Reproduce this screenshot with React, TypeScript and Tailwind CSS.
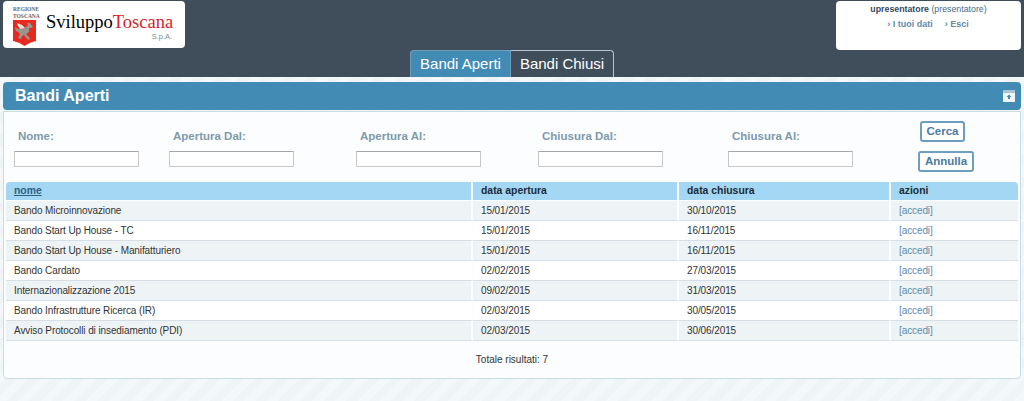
const rows = [
  ["Bando Microinnovazione", "15/01/2015", "30/10/2015"],
  ["Bando Start Up House - TC", "15/01/2015", "16/11/2015"],
  ["Bando Start Up House - Manifatturiero", "15/01/2015", "16/11/2015"],
  ["Bando Cardato", "02/02/2015", "27/03/2015"],
  ["Internazionalizzazione 2015", "09/02/2015", "31/03/2015"],
  ["Bando Infrastrutture Ricerca (IR)", "02/03/2015", "30/05/2015"],
  ["Avviso Protocolli di insediamento (PDI)", "02/03/2015", "30/06/2015"],
];

const filters = [
  { label: "Nome:", cls: "w-[155px]" },
  { label: "Apertura Dal:", cls: "w-[187px]" },
  { label: "Apertura Al:", cls: "w-[182px]" },
  { label: "Chiusura Dal:", cls: "w-[190px]" },
  { label: "Chiusura Al:", cls: "w-[190px]" },
];

function Shield() {
  return (
    <svg width="23" height="26" viewBox="0 0 23 26" className="mt-[1px]">
      <path d="M0 0H23V21Q17 22 11.5 26Q6 22 0 21Z" fill="#e62a20" />
      <path d="M5 18L7 14L5 12L3 11L2 7L5 9L8 9L12 8L15 5L14 3L17 3L20 7L18 8L16 8L16 12L13 14L16 17L17 20L14 19L11 15L9 16L8 19Z" fill="#9a938c" />
      <path d="M4 3L9 5L12 8L7 9L5 6Z" fill="#e8e4de" />
    </svg>
  );
}

function Logo() {
  return (
    <div className="flex h-[47px] w-[182px] rounded-[4px] bg-white pl-[10px] pt-[5px]">
      <div className="flex w-[33px] flex-col font-['Liberation_Serif',serif] text-[5.5px] font-bold leading-[6.5px] text-[#666]">
        <span>REGIONE</span>
        <span>TOSCANA</span>
        <Shield />
      </div>
      <div className="flex flex-col">
        <div className="mt-[6px] font-['Liberation_Serif',serif] text-[18.5px] leading-[21px] text-black">
          Sviluppo<span className="text-[#d8232a]">Toscana</span>
        </div>
        <div className="mt-[-1px] self-end pr-[1px] font-['Liberation_Sans',sans-serif] text-[7.5px] leading-[9px] text-[#888]">S.p.A.</div>
      </div>
    </div>
  );
}

function ArchiveIcon() {
  return (
    <svg width="12" height="12" viewBox="0 0 12 12">
      <rect x="0" y="0" width="12" height="3" fill="#a9c3d3" />
      <rect x="0" y="3" width="12" height="9" fill="#eef4f7" />
      <path d="M6 4.5L8.5 7H7V9H5V7H3.5Z" fill="#4f86a8" />
    </svg>
  );
}

export default function App() {
  return (
    <div className="h-[401px] w-[1024px] overflow-hidden bg-[#f2f6f8] bg-[repeating-linear-gradient(135deg,#eff4f6_0px,#eff4f6_8px,#f5f8fa_8px,#f5f8fa_16px)] font-['Liberation_Sans',Arial,sans-serif]">
      <header className="h-[77px] bg-[#3f4e5a]">
        <div className="flex h-[50px] items-start justify-between pl-[3px] pr-[3px] pt-[1px]">
          <Logo />
          <div className="h-[49px] w-[185px] rounded-[4px] bg-white pt-[3px] text-center text-[8.8px] leading-[10px] text-[#4a6a85]">
            <div>
              <b className="text-[#34495e]">upresentatore</b> (presentatore)
            </div>
            <div className="mt-[5px] flex justify-center gap-[12px] pr-[1px] text-[9px] font-bold leading-[11px] text-[#5f8bab]">
              <span>› I tuoi dati</span>
              <span>› Esci</span>
            </div>
          </div>
        </div>
        <div className="flex h-[27px] justify-center">
          <div className="flex h-[27px] w-[101px] items-center justify-center rounded-tl-[4px] border border-b-0 border-[#6f9fbd] bg-[#428bb5] text-[15px] text-white">Bandi Aperti</div>
          <div className="flex h-[27px] w-[103px] items-center justify-center rounded-tr-[4px] border border-b-0 border-l-0 border-[#b8c4cc] bg-[#3f4e5a] text-[15px] text-white">Bandi Chiusi</div>
        </div>
      </header>

      <main className="px-[3px] pt-[5px]">
        <div className="flex h-[28px] items-center justify-between rounded-[4px] bg-[#428bb5] pl-[12px] pr-[6px]">
          <h1 className="text-[16px] font-bold text-white">Bandi Aperti</h1>
          <ArchiveIcon />
        </div>
        <section className="mt-[1px] h-[268px] rounded-b-[4px] border border-[#c9dbe5] bg-[#fbfdfe] px-[2px]">
          <div className="flex h-[70px] pl-[8px]">
            <div className="flex pt-[18px]">
              {filters.map((f) => (
                <div key={f.label} className={f.cls}>
                  <div className="pl-[4px] text-[11.5px] font-bold leading-[13px] text-[#7f9aaa]">{f.label}</div>
                  <div className="mt-[8px] h-[16px] w-[125px] border border-[#c8c8c8] border-t-[#a8a8a8] bg-white" />
                </div>
              ))}
            </div>
            <div className="flex flex-col items-start pt-[9px]">
              <button className="ml-[2px] h-[21px] w-[45px] rounded-[3px] border-2 border-[#6d9dc0] bg-white text-[11.5px] font-bold text-[#4a7ba0]">Cerca</button>
              <button className="mt-[9px] h-[21px] w-[56px] rounded-[3px] border-2 border-[#6d9dc0] bg-white text-[11.5px] font-bold text-[#4a7ba0]">Annulla</button>
            </div>
          </div>
          <table className="w-[1012px] table-fixed border-separate border-spacing-0 text-left text-[10px] tracking-[-0.1px] text-[#333]">
            <colgroup>
              <col className="w-[467px]" />
              <col className="w-[206px]" />
              <col className="w-[212px]" />
              <col className="w-[127px]" />
            </colgroup>
            <thead>
              <tr className="h-[19px] text-[10.4px] font-bold tracking-normal text-[#1d2b36]">
                <th className="rounded-tl-[4px] border-r-2 border-b-[1px] border-[#fbfdfe] bg-[#a3d7f3] pl-[8px]"><u className="text-[#2d5f85]">nome</u></th>
                <th className="border-r-2 border-b-[1px] border-[#fbfdfe] bg-[#a3d7f3] pl-[8px]">data apertura</th>
                <th className="border-r-2 border-b-[1px] border-[#fbfdfe] bg-[#a3d7f3] pl-[8px]">data chiusura</th>
                <th className="rounded-tr-[4px] border-b-[1px] border-[#fbfdfe] bg-[#a3d7f3] pl-[8px]">azioni</th>
              </tr>
            </thead>
            <tbody>
              {rows.map((r, i) => {
                const bg = i % 2 === 0 ? "bg-[#eef3f6]" : "bg-white";
                return (
                  <tr key={r[0]} className="h-[20px]">
                    <td className={`border-r-2 border-b border-r-[#fbfdfe] border-b-[#d5dfe5] pl-[8px] ${bg}`}>{r[0]}</td>
                    <td className={`border-r-2 border-b border-r-[#fbfdfe] border-b-[#d5dfe5] pl-[8px] ${bg}`}>{r[1]}</td>
                    <td className={`border-r-2 border-b border-r-[#fbfdfe] border-b-[#d5dfe5] pl-[8px] ${bg}`}>{r[2]}</td>
                    <td className={`border-b border-b-[#d5dfe5] pl-[8px] text-[#5f8bab] ${bg}`}>[accedi]</td>
                  </tr>
                );
              })}
            </tbody>
          </table>
          <div className="mt-[13px] text-center text-[10px] leading-[12px] text-[#333]">Totale risultati: 7</div>
        </section>
      </main>
    </div>
  );
}
